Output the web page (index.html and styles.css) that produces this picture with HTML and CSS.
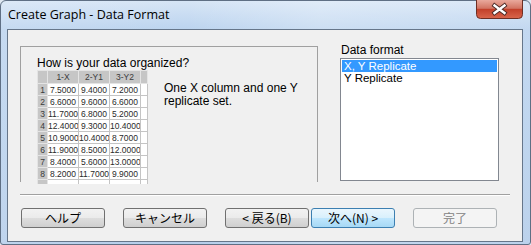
FILE: index.html
```html
<!DOCTYPE html>
<html lang="en">
<head>
    <meta charset="UTF-8">
    <meta name="viewport" content="width=device-width, initial-scale=1.0">
    <link rel="stylesheet" href="styles.css">
    <title>Create Graph - Data Format</title>
</head>
<body>
    <div class="window">
        <div class="titlebar">
            <span class="title">Create Graph - Data Format</span>
            <svg class="close" width="47" height="19" viewBox="0 0 47 19">
                <defs>
                    <linearGradient id="red" x1="0" y1="0" x2="0" y2="1">
                        <stop offset="0" stop-color="#e9a99c"/>
                        <stop offset="0.45" stop-color="#d27462"/>
                        <stop offset="0.5" stop-color="#c2402a"/>
                        <stop offset="1" stop-color="#d9664c"/>
                    </linearGradient>
                </defs>
                <path d="M0.5 0 V14.5 Q0.5 18.5 4.5 18.5 H42.5 Q46.5 18.5 46.5 14.5 V0" fill="url(#red)" stroke="#6e2f24"/>
                <path d="M18.5 5.5 L28.5 13 M28.5 5.5 L18.5 13" stroke="#4a2a26" stroke-width="4.2" stroke-linecap="square"/>
                <path d="M18.5 5.5 L28.5 13 M28.5 5.5 L18.5 13" stroke="#ffffff" stroke-width="2.4" stroke-linecap="square"/>
            </svg>
        </div>
        <div class="client">
            <div class="top">
                <div class="panel">
                    <p class="question">How is your data organized?</p>
                    <div class="sample">
                        <div class="grid-wrap">
                            <table class="grid">
                                <col class="rn"><col class="c"><col class="c"><col class="c"><col class="pad">
                                <tr class="head"><th></th><th>1-X</th><th>2-Y1</th><th>3-Y2</th><th></th></tr>
                                <tr><th>1</th><td>7.5000</td><td>9.4000</td><td>7.2000</td><td></td></tr>
                                <tr><th>2</th><td>6.6000</td><td>9.6000</td><td>6.6000</td><td></td></tr>
                                <tr><th>3</th><td>11.7000</td><td>6.8000</td><td>5.2000</td><td></td></tr>
                                <tr><th>4</th><td>12.4000</td><td>9.3000</td><td>10.4000</td><td></td></tr>
                                <tr><th>5</th><td>10.9000</td><td>10.4000</td><td>8.7000</td><td></td></tr>
                                <tr><th>6</th><td>11.9000</td><td>8.5000</td><td>12.0000</td><td></td></tr>
                                <tr><th>7</th><td>8.4000</td><td>5.6000</td><td>13.0000</td><td></td></tr>
                                <tr><th>8</th><td>8.2000</td><td>11.7000</td><td>9.9000</td><td></td></tr>
                                <tr><th></th><td></td><td></td><td></td><td></td></tr>
                            </table>
                        </div>
                        <p class="desc">One X column and one Y<br>replicate set.</p>
                    </div>
                </div>
                <div class="format">
                    <div class="format-label">Data format</div>
                    <ul class="listbox">
                        <li class="selected">X, Y Replicate</li>
                        <li>Y Replicate</li>
                    </ul>
                </div>
            </div>
            <div class="separator"></div>
            <div class="buttons">
                <button class="btn">ヘルプ</button>
                <button class="btn gap">キャンセル</button>
                <button class="btn gap">&lt; 戻る(B)</button>
                <button class="btn btn-default near">次へ(N) &gt;</button>
                <button class="btn gap" disabled>完了</button>
            </div>
        </div>
    </div>
</body>
</html>
```

FILE: styles.css
```css
body {
    margin: 0;
    background: #dfe8f2;
    font-family: "Liberation Sans", Arial, sans-serif;
    font-size: 12px;
    color: #000;
}

.window {
    box-sizing: border-box;
    width: 531px;
    height: 245px;
    padding: 0 7px 2px 6px;
    border: 1px solid #5f6f84;
    border-radius: 6px 6px 3px 3px;
    background:
        linear-gradient(90deg, rgba(255, 255, 255, 0.15), rgba(255, 255, 255, 0) 35%, rgba(255, 255, 255, 0.25) 60%, rgba(255, 255, 255, 0.1)),
        linear-gradient(180deg, #d6e5f6 0, #bcd4ef 28px, #b4cdea 100%);
    display: flex;
    flex-direction: column;
}

.titlebar {
    height: 28px;
    display: flex;
    justify-content: space-between;
    align-items: flex-start;
}

.title {
    font-family: "Open Sans", "Noto Sans", sans-serif;
    font-size: 12.5px;
    line-height: 28px;
    padding-left: 1px;
    color: #000;
}

.close {
    display: block;
    margin-top: -1px;
}

.client {
    flex: 1;
    border: 1px solid #66768a;
    background: #f0f0f0;
    padding: 0 12px;
}

.top {
    display: flex;
    align-items: flex-start;
    margin-top: 13px;
}

.panel {
    box-sizing: border-box;
    width: 298px;
    height: 136px;
    margin-top: 3px;
    border: 1px solid #a0a0a0;
    border-bottom: none;
    padding: 9px 0 0 16px;
}

.question {
    margin: 0;
    line-height: 14px;
}

.sample {
    display: flex;
    align-items: flex-start;
}

.grid-wrap {
    height: 114px;
    overflow: hidden;
}

.grid {
    table-layout: fixed;
    width: 110px;
    border-collapse: collapse;
    font-size: 8.5px;
    color: #2a2a2a;
}

.grid col.rn {
    width: 10px;
}

.grid col.c {
    width: 31px;
}

.grid col.pad {
    width: 7px;
}

.grid tr {
    height: 12px;
}

.grid tr.head {
    height: 13px;
}

.grid th,
.grid td {
    padding: 0 2px 0 0;
    border: 1px solid #c4c4c4;
    white-space: nowrap;
    overflow: hidden;
    line-height: 10px;
}

.grid th {
    background: #c6c6c6;
    border-color: #e4e4e4;
    font-weight: normal;
    text-align: center;
    padding: 0;
    color: #3a3a3a;
}

.grid td {
    background: #fff;
    text-align: right;
}

.desc {
    margin: 12px 0 0 16px;
    line-height: 13px;
}

.format {
    margin-left: 22px;
}

.format-label {
    line-height: 14px;
    padding-left: 1px;
}

.listbox {
    box-sizing: border-box;
    width: 159px;
    height: 123px;
    margin: 1px 0 0;
    padding: 1px;
    list-style: none;
    background: #fff;
    border: 1px solid #828790;
    font-size: 11.5px;
}

.listbox li {
    height: 12px;
    line-height: 12px;
    padding-left: 2px;
}

.listbox li.selected {
    background: #3399ff;
    color: #fff;
}

.separator {
    width: 490px;
    height: 1px;
    margin-top: 12px;
    background: #a0a0a0;
    box-shadow: 0 1px 0 #fff;
}

.buttons {
    display: flex;
    margin: 13px 0 0 1px;
}

.btn {
    box-sizing: border-box;
    width: 84px;
    height: 20px;
    padding: 0;
    border: 1px solid #707070;
    border-radius: 3px;
    background: linear-gradient(180deg, #f2f2f2 0%, #ebebeb 48%, #dddddd 52%, #cfcfcf 100%);
    font-family: "Noto Sans CJK JP", "Liberation Sans", sans-serif;
    font-size: 12px;
    line-height: 16px;
    color: #000;
}

.btn.gap {
    margin-left: 18px;
}

.btn.near {
    margin-left: 2px;
}

.btn-default {
    border-color: #3c7fb1;
    background: linear-gradient(180deg, #eaf6fd 0%, #d9f0fc 48%, #bee6fd 52%, #a7d9f5 100%);
}

.btn:disabled {
    border-color: #adb2b5;
    background: #f4f4f4;
    color: #838383;
}
```
